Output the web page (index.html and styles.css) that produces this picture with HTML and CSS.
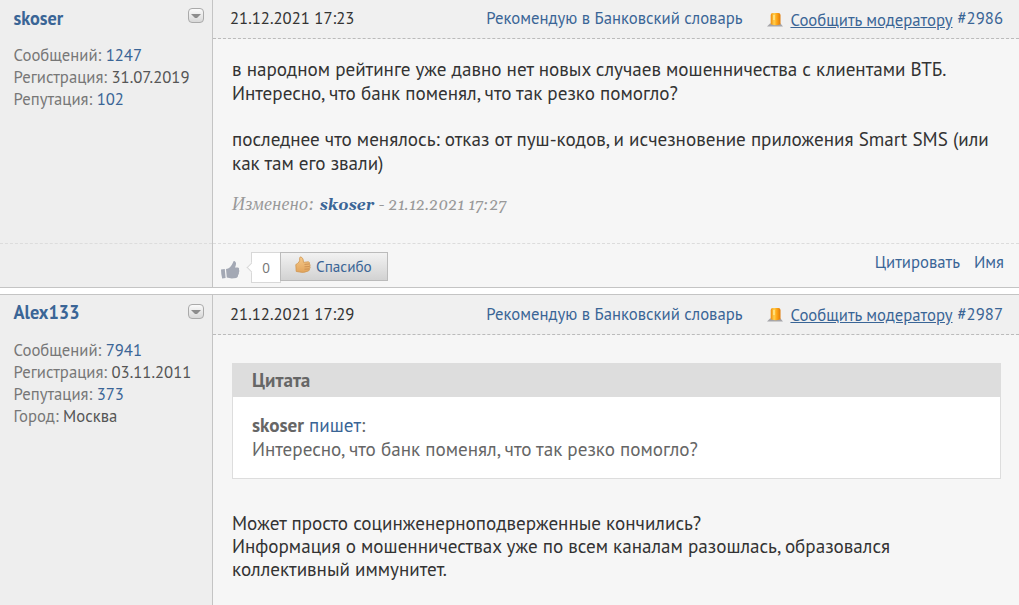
FILE: index.html
```html
<!DOCTYPE html>
<html lang="ru">
<head>
    <meta charset="UTF-8">
    <title>Форум</title>
    <link rel="stylesheet" href="styles.css">
</head>
<body>
    <svg width="0" height="0" class="defs">
        <defs>
            <linearGradient id="lamp" x1="0" x2="1" y1="0" y2="0">
                <stop offset="0" stop-color="#ee8a08"/>
                <stop offset="0.35" stop-color="#ffd050"/>
                <stop offset="0.6" stop-color="#ffa818"/>
                <stop offset="1" stop-color="#e07a08"/>
            </linearGradient>
            <linearGradient id="hand" x1="0" x2="0" y1="0" y2="1">
                <stop offset="0" stop-color="#f5c98a"/>
                <stop offset="1" stop-color="#e2a45c"/>
            </linearGradient>
            <symbol id="icon-lamp" viewBox="0 0 16 16">
                <path d="M0 14.5 L3 11.5 H13.5 L16 14.5 Z" fill="#a5a5aa"/>
                <path d="M3.7 12.3 V3 Q3.8 1 5.7 0.9 H11.5 Q13.4 1 13.5 3 V12.3 Q8.5 14.4 3.7 12.3 Z" fill="url(#lamp)"/>
                <path d="M7 3 V8" stroke="#ffe58a" stroke-width="1.6"/>
            </symbol>
        </defs>
    </svg>

    <div class="post first">
        <div class="user">
            <div class="user-top">
                <a class="name" href="#">skoser</a>
                <span class="toggle"></span>
            </div>
            <div class="info">
                <div>Сообщений: <a href="#">1247</a></div>
                <div>Регистрация: <b>31.07.2019</b></div>
                <div>Репутация: <a href="#">102</a></div>
            </div>
            <div class="user-foot"></div>
        </div>
        <div class="message">
            <div class="head">
                <span class="date">21.12.2021 17:23</span>
                <a class="recommend" href="#">Рекомендую в Банковский словарь</a>
                <svg class="lamp" width="16" height="16"><use href="#icon-lamp"/></svg>
                <a class="report" href="#">Сообщить модератору</a>
                <a class="number" href="#">#2986</a>
            </div>
            <div class="text">
                в народном рейтинге уже давно нет новых случаев мошенничества с клиентами ВТБ.<br>
                Интересно, что банк поменял, что так резко помогло?<br>
                <br>
                последнее что менялось: отказ от пуш-кодов, и исчезновение приложения Smart SMS (или<br>
                как там его звали)
                <div class="edited"><span>Изменено:</span> <a href="#">skoser</a> - 21.12.2021 17:27</div>
            </div>
            <div class="foot">
                <svg class="like" width="20" height="20" viewBox="0 0 20 20">
                    <path d="M1 9.5 L4.8 9 L5.6 18 L2.2 18.6 Q1 14 1 9.5 Z M6 9 Q10.5 8.4 13 2.4 Q13.4 0.8 14.8 1.2 Q17.2 2.6 15 7.6 H18 Q19.6 8 19 9.8 Q19.8 11.2 18.9 12.4 Q19.2 14 18.1 15 Q18.2 17.5 16.2 17.9 Q11 19 6.8 17.6 Z" fill="#a3a8b4"/>
                </svg>
                <span class="count">0</span>
                <a class="thanks" href="#">
                    <svg width="16" height="18" viewBox="0 0 16 18">
                        <path d="M0.8 8.6 Q2.6 7.6 4 6 Q5 4.6 4.6 2.2 Q4.7 0.7 6 0.9 Q8.6 1.8 8.5 6.4 L13.3 5.8 Q15 6.2 14.4 7.9 Q15.6 9 14.8 10.3 Q15.6 11.8 14.5 12.8 Q14.8 14.7 12.8 15.2 Q8 17.2 4.5 16 L1.2 15.4 Z" fill="url(#hand)" stroke="#cf9752" stroke-width="0.8"/>
                        <path d="M9.5 8.4 L14.2 8 M9.5 10.8 L14.5 10.5 M9.5 13.2 L14.2 12.9" stroke="#c08348" stroke-width="0.7"/>
                    </svg>
                    <span>Спасибо</span>
                </a>
                <a class="cite" href="#">Цитировать</a>
                <a class="cite-name" href="#">Имя</a>
            </div>
        </div>
    </div>

    <div class="post second">
        <div class="user">
            <div class="user-top">
                <a class="name" href="#">Alex133</a>
                <span class="toggle"></span>
            </div>
            <div class="info">
                <div>Сообщений: <a href="#">7941</a></div>
                <div>Регистрация: <b>03.11.2011</b></div>
                <div>Репутация: <a href="#">373</a></div>
                <div>Город: <b>Москва</b></div>
            </div>
        </div>
        <div class="message">
            <div class="head">
                <span class="date">21.12.2021 17:29</span>
                <a class="recommend" href="#">Рекомендую в Банковский словарь</a>
                <svg class="lamp" width="16" height="16"><use href="#icon-lamp"/></svg>
                <a class="report" href="#">Сообщить модератору</a>
                <a class="number" href="#">#2987</a>
            </div>
            <div class="text">
                <div class="quote">
                    <div class="quote-title">Цитата</div>
                    <div class="quote-body">
                        <strong>skoser</strong> <a href="#">пишет</a>:<br>
                        Интересно, что банк поменял, что так резко помогло?
                    </div>
                </div>
                Может просто социнженерноподверженные кончились?<br>
                Информация о мошенничествах уже по всем каналам разошлась, образовался<br>
                коллективный иммунитет.
            </div>
        </div>
    </div>
</body>
</html>
```
FILE: styles.css
```css
body {
    margin: 0;
    height: 605px;
    overflow: hidden;
    background: #fff;
    color: #333;
    font-family: "PT Sans", "Noto Sans", "Open Sans", sans-serif;
    font-size: 16.7px;
}
a {
    color: #3a6596;
    text-decoration: none;
}
.defs {
    display: block;
}
.post {
    display: grid;
    grid-template-columns: 212px 1fr;
    box-sizing: border-box;
    border-bottom: 1px solid #c4c4c4;
}
.first {
    height: 288px;
}
.second {
    height: 330px;
    margin-top: 6px;
    border-top: 1px solid #c4c4c4;
}

/* left column */
.user {
    display: flex;
    flex-direction: column;
    background: #eee;
}
.user-top {
    display: flex;
    justify-content: space-between;
    height: 44px;
    padding: 6px 8px 0 13.5px;
    box-sizing: border-box;
    line-height: 24px;
}
.second .user-top {
    line-height: 23px;
}
.name {
    font-weight: bold;
    font-size: 18.3px;
}
.toggle {
    width: 14px;
    height: 13px;
    margin-top: 2px;
    border: 1px solid #aaa;
    border-radius: 4px;
    background: linear-gradient(#fafafa, #d8d8d8);
    display: flex;
    align-items: center;
    justify-content: center;
}
.second .toggle {
    margin-top: 3px;
}
.toggle::before {
    content: "";
    width: 2px;
    border: 4px solid transparent;
    border-top-color: #8c8c8c;
    border-bottom: 0;
}
.info {
    padding-left: 13.5px;
    line-height: 22px;
    color: #777;
}
.info b {
    font-weight: normal;
    color: #555;
}
.user-foot {
    height: 43px;
    margin-top: auto;
    border-top: 1px dashed #dcdcdc;
}

/* right column */
.message {
    display: flex;
    flex-direction: column;
    border-left: 1px solid #c4c4c4;
    background: #f6f6f6;
}
.head {
    display: flex;
    height: 38px;
    padding: 0 16px 0 17px;
    border-bottom: 1px dashed #bbb;
    background: #f0f0f0;
    line-height: 36px;
    white-space: nowrap;
}
.second .head {
    height: 39px;
    line-height: 38px;
}
.recommend {
    margin-left: auto;
}
.lamp {
    margin: 12px 7px 0 25px;
}
.report {
    padding-top: 2px;
    margin-right: 5px;
    text-decoration: underline;
}
.second .report {
    padding-top: 1px;
}
.text {
    padding: 19px 18px 0 19px;
    font-size: 19.1px;
    line-height: 23.3px;
    white-space: nowrap;
}
.first .text {
    padding-top: 19.4px;
}
.edited {
    margin-top: 18px;
    font-family: Georgia, Gelasio, "Liberation Serif", serif;
    font-style: italic;
    font-size: 16.2px;
    color: #999;
}
.edited a {
    font-weight: bold;
}
.edited span {
    font-size: 18px;
    letter-spacing: 0.3px;
}
.foot {
    display: flex;
    height: 43px;
    margin-top: auto;
    padding: 0 15px 0 7px;
    border-top: 1px dashed #dcdcdc;
}
.like {
    margin-top: 16px;
}
.count {
    position: relative;
    width: 28px;
    height: 29px;
    margin: 8px 0 0 11px;
    border: 1px solid #d8d8d8;
    background: #fff;
    color: #777;
    font-size: 14px;
    line-height: 30px;
    text-align: center;
}
.count::before {
    content: "";
    position: absolute;
    left: -4px;
    top: 11px;
    width: 6px;
    height: 6px;
    background: #fff;
    border: solid #d8d8d8;
    border-width: 0 0 1px 1px;
    transform: rotate(45deg);
}
.thanks {
    display: flex;
    width: 107px;
    height: 29px;
    margin-top: 8px;
    padding: 3px 0 0 14px;
    box-sizing: border-box;
    border: 1px solid #bbb;
    background: linear-gradient(#f2f2f2, #d2d2d2);
    font-size: 15.2px;
    line-height: 22px;
}
.count + .thanks {
    margin-left: -1px;
    width: 108px;
    z-index: 1;
}
.thanks span {
    margin-left: 5px;
}
.cite {
    margin-left: auto;
    line-height: 36px;
}
.cite-name {
    margin-left: 14px;
    line-height: 36px;
}

/* quote */
.quote {
    margin: 9px 0 33px;
    border: 1px solid #ddd;
    background: #fff;
    color: #666;
}
.quote-title {
    height: 33px;
    padding-left: 19px;
    background: #ddd;
    font-weight: bold;
    line-height: 33px;
}
.quote-body {
    padding: 17.3px 19px 16.7px;
}
```
